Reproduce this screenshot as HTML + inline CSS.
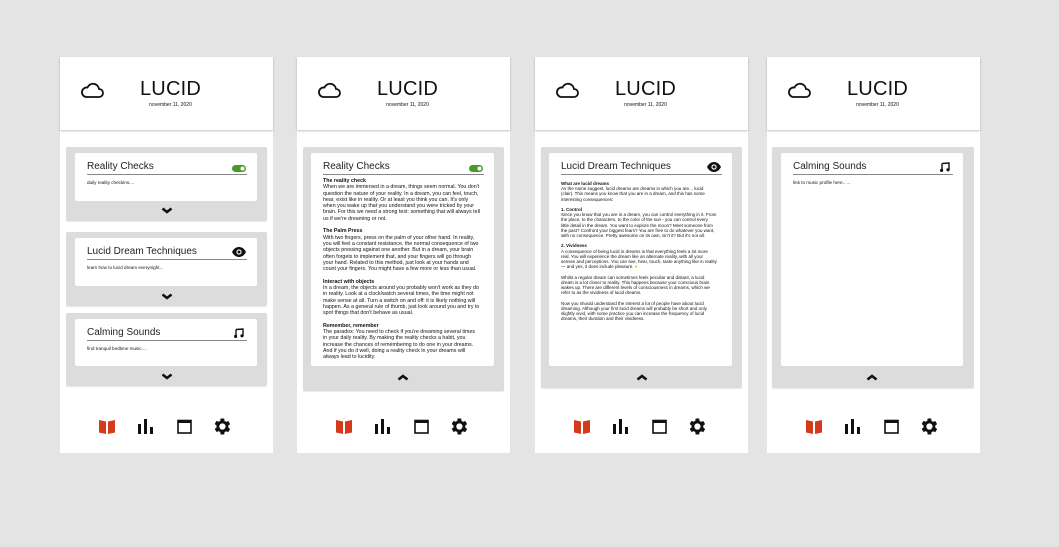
<!DOCTYPE html>
<html><head><meta charset="utf-8"><style>
*{margin:0;padding:0;box-sizing:border-box}
body{width:1059px;height:547px;background:#e4e4e4;position:relative;overflow:hidden;font-family:"Liberation Sans",Arial,sans-serif;color:#111}
.ph{position:absolute;top:57px;width:213px;height:396px;background:#fff}
.hd{position:absolute;left:0;top:0;width:213px;height:73px;background:#fff;box-shadow:0 1px 2px rgba(0,0,0,.25)}
.cloud{position:absolute;left:20px;top:25px}
.logo{position:absolute;left:4px;width:213px;top:21px;text-align:center;font-size:20px;letter-spacing:.2px}
.date{position:absolute;left:4px;width:213px;top:45px;text-align:center;font-size:5px}
.gp{position:absolute;background:#dcdcdc;border-radius:2px;box-shadow:0 1px 1px rgba(0,0,0,.1)}
.wc{position:absolute;background:#fff;border-radius:2px}
.tt{position:absolute;left:12px;top:8px;font-size:10px;color:#222}
.ln{position:absolute;left:12px;right:10px;top:21px;height:1px;background:#888}
.sub{position:absolute;left:12px;top:27px;font-size:4.6px}
.chev{position:absolute}
.nav{position:absolute;top:362px;left:0;width:213px;height:16px}
.body2{position:absolute;left:12px;top:25px;font-size:5.3px;line-height:6.3px;white-space:pre}
.body3{position:absolute;left:12px;top:28px;font-size:4.5px;line-height:5.2px;white-space:pre}
b{font-weight:bold}
</style></head><body>

<!-- Phone 1 -->
<div class="ph" style="left:60px">
 <div class="hd">
  <svg class="cloud" width="24" height="16" viewBox="0 0 24 16"><path d="M6 15h13a4 4 0 0 0 0-8 6 6 0 0 0-11.5-1.5A4.8 4.8 0 0 0 6 15z" fill="none" stroke="#111" stroke-width="1.8"/></svg>
  <div class="logo">LUCID</div><div class="date">november 11, 2020</div>
 </div>
 <div class="gp" style="left:6px;top:90px;width:201px;height:74px">
  <div class="wc" style="left:9px;top:6px;width:182px;height:48px">
   <div class="tt">Reality Checks</div>
   <svg style="position:absolute;right:11px;top:12px" width="14" height="7"><rect width="14" height="7" rx="3.5" fill="#4a9a2a"/><circle cx="10.5" cy="3.5" r="2" fill="#fff"/></svg>
   <div class="ln"></div><div class="sub">daily reality checkins....</div>
  </div>
  <svg class="chev" style="left:95px;top:60px" width="12" height="7"><path d="M1.5 1.5l4.5 3.5 4.5-3.5" fill="none" stroke="#111" stroke-width="2.6"/></svg>
 </div>
 <div class="gp" style="left:6px;top:175px;width:201px;height:74px">
  <div class="wc" style="left:9px;top:6px;width:182px;height:48px">
   <div class="tt">Lucid Dream Techniques</div>
   <svg style="position:absolute;right:11px;top:9px" width="14" height="10" viewBox="0 0 14 10"><path d="M0 5C2 1 5 0 7 0s5 1 7 5c-2 4-5 5-7 5S2 9 0 5z" fill="#111"/><circle cx="7" cy="5" r="2.6" fill="#fff"/><circle cx="7" cy="5" r="1.5" fill="#111"/></svg>
   <div class="ln"></div><div class="sub">learn how to lucid dream everynight...</div>
  </div>
  <svg class="chev" style="left:95px;top:61px" width="12" height="7"><path d="M1.5 1.5l4.5 3.5 4.5-3.5" fill="none" stroke="#111" stroke-width="2.6"/></svg>
 </div>
 <div class="gp" style="left:6px;top:256px;width:201px;height:73px">
  <div class="wc" style="left:9px;top:6px;width:182px;height:47px">
   <div class="tt">Calming Sounds</div>
   <svg style="position:absolute;right:13px;top:9px" width="10" height="10" viewBox="0 0 10 10"><path d="M2 1.5L9 1v7M2 1.5v7" fill="none" stroke="#111" stroke-width="1.4"/><circle cx="1.6" cy="8.4" r="1.6" fill="#111"/><circle cx="8" cy="7.8" r="1.6" fill="#111"/></svg>
   <div class="ln"></div><div class="sub">find tranquil bedtime music....</div>
  </div>
  <svg class="chev" style="left:95px;top:60px" width="12" height="7"><path d="M1.5 1.5l4.5 3.5 4.5-3.5" fill="none" stroke="#111" stroke-width="2.6"/></svg>
 </div>
 <div class="nav">
  <svg style="position:absolute;left:39px;top:0" width="16" height="15" viewBox="0 0 16 15"><path d="M0 1l7 1.5V15L0 13.5zM16 1L9 2.5V15l7-1.5z" fill="#d63a1c"/></svg>
  <svg style="position:absolute;left:78px;top:0" width="15" height="15"><rect x="0" y="5" width="3" height="10" fill="#111"/><rect x="6" y="0" width="3" height="15" fill="#111"/><rect x="12" y="8" width="3" height="7" fill="#111"/></svg>
  <svg style="position:absolute;left:117px;top:0" width="15" height="15"><rect x="1" y="1.5" width="13" height="12.5" fill="none" stroke="#111" stroke-width="1.6"/><rect x="1" y="1" width="13" height="3" fill="#111"/></svg>
  <svg style="position:absolute;left:154px;top:-1px" width="17" height="17" viewBox="3.5 2.5 19 19"><path d="M19.4 13a7.5 7.5 0 0 0 0-2l2.1-1.6-2-3.5-2.5 1a7.4 7.4 0 0 0-1.7-1L14.9 3h-4l-.4 2.7a7.4 7.4 0 0 0-1.7 1l-2.5-1-2 3.5L6.4 11a7.5 7.5 0 0 0 0 2l-2.1 1.6 2 3.5 2.5-1a7.4 7.4 0 0 0 1.7 1l.4 2.9h4l.4-2.7a7.4 7.4 0 0 0 1.7-1l2.5 1 2-3.5zM12.9 15.5a3.5 3.5 0 1 1 0-7 3.5 3.5 0 0 1 0 7z" fill="#111"/></svg>
 </div>
</div>

<!-- Phone 2 -->
<div class="ph" style="left:297px">
 <div class="hd">
  <svg class="cloud" width="24" height="16" viewBox="0 0 24 16"><path d="M6 15h13a4 4 0 0 0 0-8 6 6 0 0 0-11.5-1.5A4.8 4.8 0 0 0 6 15z" fill="none" stroke="#111" stroke-width="1.8"/></svg>
  <div class="logo">LUCID</div><div class="date">november 11, 2020</div>
 </div>
 <div class="gp" style="left:6px;top:90px;width:201px;height:244px">
  <div class="wc" style="left:8px;top:6px;width:183px;height:213px">
   <div class="tt">Reality Checks</div>
   <svg style="position:absolute;right:11px;top:12px" width="14" height="7"><rect width="14" height="7" rx="3.5" fill="#4a9a2a"/><circle cx="10.5" cy="3.5" r="2" fill="#fff"/></svg>
   <div class="ln"></div>
<div class="body2"><b>The reality check</b>
When we are immersed in a dream, things seem normal. You don't
question the nature of your reality. In a dream, you can feel, touch,
hear, exist like in reality. Or at least you think you can. It's only
when you wake up that you understand you were tricked by your
brain. For this we need a strong test: something that will always tell
us if we're dreaming or not.

<b>The Palm Press</b>
With two fingers, press on the palm of your other hand. In reality,
you will feel a constant resistance, the normal consequence of two
objects pressing against one another. But in a dream, your brain
often forgets to implement that, and your fingers will go through
your hand. Related to this method, just look at your hands and
count your fingers. You might have a few more or less than usual.

<b>Interact with objects</b>
In a dream, the objects around you probably won't work as they do
in reality. Look at a clock/watch several times, the time might not
make sense at all. Turn a switch on and off: it is likely nothing will
happen. As a general rule of thumb, just look around you and try to
spot things that don't behave as usual.

<b>Remember, remember</b>
The paradox: You need to check if you're dreaming several times
in your daily reality. By making the reality checks a habit, you
increase the chances of remembering to do one in your dreams.
And if you do it well, doing a reality check in your dreams will
always lead to lucidity.</div>
  </div>
  <svg class="chev" style="left:94px;top:227px" width="12" height="7"><path d="M1.5 5.5l4.5-3.5 4.5 3.5" fill="none" stroke="#111" stroke-width="2.6"/></svg>
 </div>
 <div class="nav">
  <svg style="position:absolute;left:39px;top:0" width="16" height="15" viewBox="0 0 16 15"><path d="M0 1l7 1.5V15L0 13.5zM16 1L9 2.5V15l7-1.5z" fill="#d63a1c"/></svg>
  <svg style="position:absolute;left:78px;top:0" width="15" height="15"><rect x="0" y="5" width="3" height="10" fill="#111"/><rect x="6" y="0" width="3" height="15" fill="#111"/><rect x="12" y="8" width="3" height="7" fill="#111"/></svg>
  <svg style="position:absolute;left:117px;top:0" width="15" height="15"><rect x="1" y="1.5" width="13" height="12.5" fill="none" stroke="#111" stroke-width="1.6"/><rect x="1" y="1" width="13" height="3" fill="#111"/></svg>
  <svg style="position:absolute;left:154px;top:-1px" width="17" height="17" viewBox="3.5 2.5 19 19"><path d="M19.4 13a7.5 7.5 0 0 0 0-2l2.1-1.6-2-3.5-2.5 1a7.4 7.4 0 0 0-1.7-1L14.9 3h-4l-.4 2.7a7.4 7.4 0 0 0-1.7 1l-2.5-1-2 3.5L6.4 11a7.5 7.5 0 0 0 0 2l-2.1 1.6 2 3.5 2.5-1a7.4 7.4 0 0 0 1.7 1l.4 2.9h4l.4-2.7a7.4 7.4 0 0 0 1.7-1l2.5 1 2-3.5zM12.9 15.5a3.5 3.5 0 1 1 0-7 3.5 3.5 0 0 1 0 7z" fill="#111"/></svg>
 </div>
</div>

<!-- Phone 3 -->
<div class="ph" style="left:535px">
 <div class="hd">
  <svg class="cloud" width="24" height="16" viewBox="0 0 24 16"><path d="M6 15h13a4 4 0 0 0 0-8 6 6 0 0 0-11.5-1.5A4.8 4.8 0 0 0 6 15z" fill="none" stroke="#111" stroke-width="1.8"/></svg>
  <div class="logo">LUCID</div><div class="date">november 11, 2020</div>
 </div>
 <div class="gp" style="left:6px;top:90px;width:201px;height:241px">
  <div class="wc" style="left:8px;top:6px;width:183px;height:213px">
   <div class="tt">Lucid Dream Techniques</div>
   <svg style="position:absolute;right:11px;top:9px" width="14" height="10" viewBox="0 0 14 10"><path d="M0 5C2 1 5 0 7 0s5 1 7 5c-2 4-5 5-7 5S2 9 0 5z" fill="#111"/><circle cx="7" cy="5" r="2.6" fill="#fff"/><circle cx="7" cy="5" r="1.5" fill="#111"/></svg>
   <div class="ln"></div>
<div class="body3"><b>What are lucid dreams</b>
As the name suggest, lucid dreams are dreams in which you are... lucid
(clair). This means you know that you are in a dream, and this has some
interesting consequences:

<b>1. Control</b>
Since you know that you are in a dream, you can control everything in it. From
the place, to the characters, to the color of the sun - you can control every
little detail in the dream. You want to explore the moon? Meet someone from
the past? Confront your biggest fears? You are free to do whatever you want,
with no consequence. Pretty awesome on its own, isn't it? But it's not all.

<b>2. Vividness</b>
A consequence of being lucid in dreams is that everything feels a lot more
real. You will experience the dream like an alternate reality, with all your
senses and perceptions. You can see, hear, touch, taste anything like in reality
— and yes, it does include pleasure. <span style="color:#e8b400">●</span>

Whilst a regular dream can sometimes feels peculiar and distant, a lucid
dream is a lot closer to reality. This happens because your conscious brain
wakes up. There are different levels of consciousness in dreams, which we
refer to as the vividness of lucid dreams.

Now you should understand the interest a lot of people have about lucid
dreaming. Although your first lucid dreams will probably be short and only
slightly vivid, with some practice you can increase the frequency of lucid
dreams, their duration and their vividness.</div>
  </div>
  <svg class="chev" style="left:95px;top:227px" width="12" height="7"><path d="M1.5 5.5l4.5-3.5 4.5 3.5" fill="none" stroke="#111" stroke-width="2.6"/></svg>
 </div>
 <div class="nav">
  <svg style="position:absolute;left:39px;top:0" width="16" height="15" viewBox="0 0 16 15"><path d="M0 1l7 1.5V15L0 13.5zM16 1L9 2.5V15l7-1.5z" fill="#d63a1c"/></svg>
  <svg style="position:absolute;left:78px;top:0" width="15" height="15"><rect x="0" y="5" width="3" height="10" fill="#111"/><rect x="6" y="0" width="3" height="15" fill="#111"/><rect x="12" y="8" width="3" height="7" fill="#111"/></svg>
  <svg style="position:absolute;left:117px;top:0" width="15" height="15"><rect x="1" y="1.5" width="13" height="12.5" fill="none" stroke="#111" stroke-width="1.6"/><rect x="1" y="1" width="13" height="3" fill="#111"/></svg>
  <svg style="position:absolute;left:154px;top:-1px" width="17" height="17" viewBox="3.5 2.5 19 19"><path d="M19.4 13a7.5 7.5 0 0 0 0-2l2.1-1.6-2-3.5-2.5 1a7.4 7.4 0 0 0-1.7-1L14.9 3h-4l-.4 2.7a7.4 7.4 0 0 0-1.7 1l-2.5-1-2 3.5L6.4 11a7.5 7.5 0 0 0 0 2l-2.1 1.6 2 3.5 2.5-1a7.4 7.4 0 0 0 1.7 1l.4 2.9h4l.4-2.7a7.4 7.4 0 0 0 1.7-1l2.5 1 2-3.5zM12.9 15.5a3.5 3.5 0 1 1 0-7 3.5 3.5 0 0 1 0 7z" fill="#111"/></svg>
 </div>
</div>

<!-- Phone 4 -->
<div class="ph" style="left:767px">
 <div class="hd">
  <svg class="cloud" width="24" height="16" viewBox="0 0 24 16"><path d="M6 15h13a4 4 0 0 0 0-8 6 6 0 0 0-11.5-1.5A4.8 4.8 0 0 0 6 15z" fill="none" stroke="#111" stroke-width="1.8"/></svg>
  <div class="logo">LUCID</div><div class="date">november 11, 2020</div>
 </div>
 <div class="gp" style="left:5px;top:90px;width:202px;height:241px">
  <div class="wc" style="left:9px;top:6px;width:182px;height:213px">
   <div class="tt">Calming Sounds</div>
   <svg style="position:absolute;right:13px;top:9px" width="10" height="10" viewBox="0 0 10 10"><path d="M2 1.5L9 1v7M2 1.5v7" fill="none" stroke="#111" stroke-width="1.4"/><circle cx="1.6" cy="8.4" r="1.6" fill="#111"/><circle cx="8" cy="7.8" r="1.6" fill="#111"/></svg>
   <div class="ln"></div><div class="sub">link to music profile here.. ...</div>
  </div>
  <svg class="chev" style="left:94px;top:227px" width="12" height="7"><path d="M1.5 5.5l4.5-3.5 4.5 3.5" fill="none" stroke="#111" stroke-width="2.6"/></svg>
 </div>
 <div class="nav">
  <svg style="position:absolute;left:39px;top:0" width="16" height="15" viewBox="0 0 16 15"><path d="M0 1l7 1.5V15L0 13.5zM16 1L9 2.5V15l7-1.5z" fill="#d63a1c"/></svg>
  <svg style="position:absolute;left:78px;top:0" width="15" height="15"><rect x="0" y="5" width="3" height="10" fill="#111"/><rect x="6" y="0" width="3" height="15" fill="#111"/><rect x="12" y="8" width="3" height="7" fill="#111"/></svg>
  <svg style="position:absolute;left:117px;top:0" width="15" height="15"><rect x="1" y="1.5" width="13" height="12.5" fill="none" stroke="#111" stroke-width="1.6"/><rect x="1" y="1" width="13" height="3" fill="#111"/></svg>
  <svg style="position:absolute;left:154px;top:-1px" width="17" height="17" viewBox="3.5 2.5 19 19"><path d="M19.4 13a7.5 7.5 0 0 0 0-2l2.1-1.6-2-3.5-2.5 1a7.4 7.4 0 0 0-1.7-1L14.9 3h-4l-.4 2.7a7.4 7.4 0 0 0-1.7 1l-2.5-1-2 3.5L6.4 11a7.5 7.5 0 0 0 0 2l-2.1 1.6 2 3.5 2.5-1a7.4 7.4 0 0 0 1.7 1l.4 2.9h4l.4-2.7a7.4 7.4 0 0 0 1.7-1l2.5 1 2-3.5zM12.9 15.5a3.5 3.5 0 1 1 0-7 3.5 3.5 0 0 1 0 7z" fill="#111"/></svg>
 </div>
</div>
</body></html>
